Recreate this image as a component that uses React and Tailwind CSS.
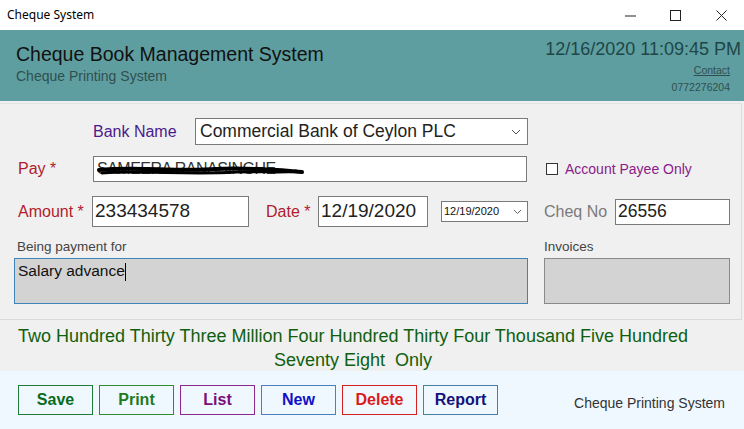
import React from "react";

const sans = { fontFamily: '"Liberation Sans", Arial, sans-serif' };

const buttons = [
  { label: "Save", cls: "border-[#1e7b3a] text-[#0b6b1e]" },
  { label: "Print", cls: "border-[#2e8b2e] text-[#1f7a1f]" },
  { label: "List", cls: "border-[#8b2a8b] text-[#7a0f7a]" },
  { label: "New", cls: "border-[#4a7fc0] text-[#1010c8]" },
  { label: "Delete", cls: "border-[#d42020] text-[#d81b1b]" },
  { label: "Report", cls: "border-[#4a7fa8] text-[#12127a]" },
];

const Chevron = ({ size = 10 }) => (
  <svg width={size} height={size * 0.6} viewBox="0 0 10 6" fill="none">
    <path d="M1 1l4 4 4-4" stroke="#555" strokeWidth="1" />
  </svg>
);

const App = () => {
  return (
    <div className="w-[744px] h-[429px] overflow-hidden bg-[#f0f0f0] flex flex-col" style={sans}>
      {/* window title bar */}
      <div className="h-[30px] bg-white flex items-center shrink-0">
        <span className="pl-[7px] text-[12px] text-black" style={{ fontFamily: '"Noto Sans", "Open Sans", sans-serif' }}>
          Cheque System
        </span>
        <div className="ml-auto flex items-center h-full">
          <div className="w-[45px] h-full flex items-center justify-center">
            <svg width="11" height="11" viewBox="0 0 11 11"><path d="M0 6h11" stroke="#222" strokeWidth="1" /></svg>
          </div>
          <div className="w-[45px] h-full flex items-center justify-center">
            <svg width="11" height="11" viewBox="0 0 11 11"><rect x="0.5" y="0.5" width="10" height="10" fill="none" stroke="#222" strokeWidth="1" /></svg>
          </div>
          <div className="w-[46px] h-full flex items-center justify-center">
            <svg width="11" height="11" viewBox="0 0 11 11"><path d="M0.5 0.5l10 10M10.5 0.5l-10 10" stroke="#222" strokeWidth="1" /></svg>
          </div>
        </div>
      </div>

      {/* header */}
      <div className="h-[71px] bg-[#5f9ea0] flex justify-between shrink-0">
        <div className="pl-[16px] pt-[12px]">
          <div className="text-[19.5px] leading-[24px] text-[#111]">Cheque Book Management System</div>
          <div className="mt-[2px] text-[14px] leading-[17px] text-[#2f4f4f]">Cheque Printing System</div>
        </div>
        <div className="pr-[3px] pt-[8px] flex flex-col items-end">
          <div className="text-[18px] leading-[22px] text-[#1d4747]">12/16/2020 11:09:45 PM</div>
          <div className="pr-[11px] mt-[4px] text-[10.5px] leading-[13px] text-[#2f4f4f] underline">Contact</div>
          <div className="pr-[11px] mt-[4px] text-[10.5px] leading-[13px] text-[#2f4f4f]">0772276204</div>
        </div>
      </div>

      {/* form panel */}
      <div className="h-[217px] mt-[2px] border-t border-[#e2e2e2] border-r border-r-[#dcdcdc] border-b border-b-[#dadada] mr-[2px] flex flex-col shrink-0">
        <div className="flex items-center pl-[93px] mt-[14px]">
          <span className="w-[102px] text-[16px] text-[#4b1a8c]">Bank Name</span>
          <div className="w-[333px] h-[27px] bg-white border border-[#7a7a7a] flex items-center pl-[4px] pr-[6px]">
            <span className="text-[17.5px] text-[#222]">Commercial Bank of Ceylon PLC</span>
            <span className="ml-auto"><Chevron /></span>
          </div>
        </div>

        <div className="flex items-center pl-[18px] mt-[11px]">
          <span className="w-[75px] text-[16px] text-[#b01c2c]">Pay *</span>
          <div className="relative w-[434px] h-[26px] bg-white border border-[#7a7a7a] flex items-center pl-[3px]">
            <span className="text-[16px] text-[#333] tracking-[-0.5px]">SAMEERA RANASINGHE</span>
            <svg className="absolute left-[2px] top-[6px]" width="210" height="14" viewBox="0 0 210 14">
              <path d="M3 7 C40 3 80 9 120 6 C150 4 180 7 206 9" stroke="#000" strokeWidth="4" fill="none" strokeLinecap="round" />
              <path d="M6 10 C50 7 90 12 140 9 C170 8 190 10 200 8" stroke="#000" strokeWidth="3" fill="none" strokeLinecap="round" />
            </svg>
          </div>
          <div className="ml-[19px] w-[12px] h-[12px] bg-white border border-[#333]" />
          <span className="ml-[7px] text-[14px] text-[#8b1a8b]">Account Payee Only</span>
        </div>

        <div className="flex items-center pl-[18px] mt-[14px]">
          <span className="w-[74px] text-[16px] text-[#b01c2c]">Amount *</span>
          <div className="w-[157px] h-[31px] bg-white border border-[#7a7a7a] flex items-center pl-[2px]">
            <span className="text-[19px] text-[#222]">233434578</span>
          </div>
          <span className="ml-[17px] w-[52px] text-[16px] text-[#b01c2c]">Date *</span>
          <div className="w-[110px] h-[31px] bg-white border border-[#7a7a7a] flex items-center pl-[2px]">
            <span className="text-[19px] text-[#222]">12/19/2020</span>
          </div>
          <div className="ml-[13px] w-[87px] h-[21px] bg-white border border-[#7a7a7a] flex items-center pl-[2px] pr-[5px]">
            <span className="text-[11px] text-[#111]">12/19/2020</span>
            <span className="ml-auto"><Chevron size={9} /></span>
          </div>
          <span className="ml-[16px] w-[71px] text-[16px] text-[#7a7a7a]">Cheq No</span>
          <div className="w-[115px] h-[26px] bg-white border border-[#7a7a7a] flex items-center pl-[2px]">
            <span className="text-[17.5px] text-[#222]">26556</span>
          </div>
        </div>

        <div className="flex mt-[12px] text-[13.5px] leading-[15px] text-[#444]">
          <span className="pl-[17px] w-[544px]">Being payment for</span>
          <span>Invoices</span>
        </div>

        <div className="flex pl-[14px] mt-[4px]">
          <div className="w-[514px] h-[46px] bg-[#d3d3d3] border border-[#3f84b8] pl-[3px]">
            <span className="text-[15.5px] text-[#111]">Salary advance</span>
            <span className="inline-block w-[1px] h-[18px] bg-black align-middle" />
          </div>
          <div className="ml-[16px] w-[186px] h-[46px] bg-[#d3d3d3] border border-[#8a8a8a]" />
        </div>
      </div>

      {/* amount in words */}
      <div className="h-[51px] w-[706px] pt-[4px] text-center text-[18px] leading-[24px] text-[#0f5f0f] shrink-0">
        <div>Two Hundred Thirty Three Million Four Hundred Thirty Four Thousand Five Hundred</div>
        <div className="whitespace-pre">Seventy Eight  Only</div>
      </div>

      {/* bottom bar */}
      <div className="flex-1 bg-[#f0f8ff] flex items-start pt-[14px] pl-[18px] pr-[19px]">
        <div className="flex gap-[6px]">
          {buttons.map((b) => (
            <button
              key={b.label}
              className={`w-[75px] h-[30px] border bg-white/0 font-bold text-[16px] ${b.cls}`}
              style={sans}
            >
              {b.label}
            </button>
          ))}
        </div>
        <span className="ml-auto mt-[8px] text-[14px] text-[#333]">Cheque Printing System</span>
      </div>
    </div>
  );
};

export default App;
